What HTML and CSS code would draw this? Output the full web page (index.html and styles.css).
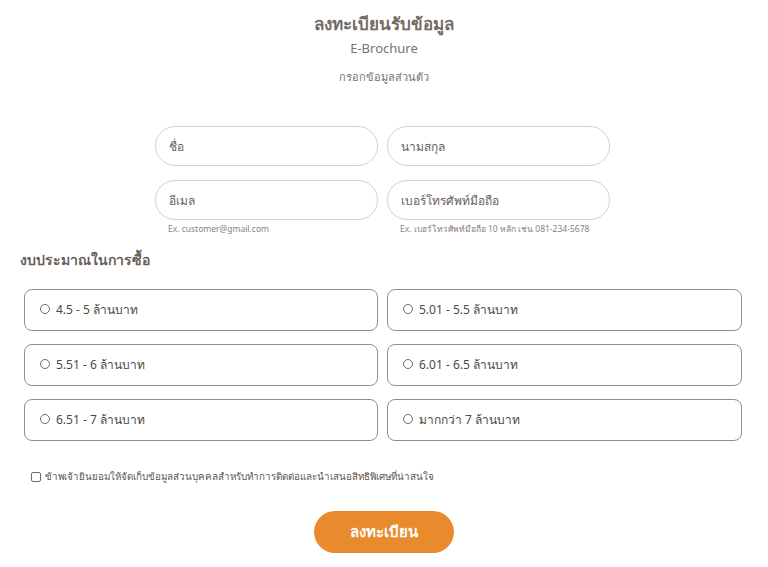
FILE: index.html
```html
<!DOCTYPE html>
<html lang="th">
<head>
<meta charset="utf-8">
<link rel="stylesheet" href="styles.css">
</head>
<body>
<main class="page">
  <header class="head">
    <h1 class="title">ลงทะเบียนรับข้อมูล</h1>
    <div class="sub">E-Brochure</div>
    <div class="note">กรอกข้อมูลส่วนตัว</div>
  </header>

  <section class="fields">
    <div class="field"><div class="input">ชื่อ</div></div>
    <div class="field"><div class="input">นามสกุล</div></div>
    <div class="field">
      <div class="input">อีเมล</div>
      <div class="hint">Ex. customer@gmail.com</div>
    </div>
    <div class="field">
      <div class="input">เบอร์โทรศัพท์มือถือ</div>
      <div class="hint">Ex. เบอร์โทรศัพท์มือถือ 10 หลัก เช่น 081-234-5678</div>
    </div>
  </section>

  <h2 class="label">งบประมาณในการซื้อ</h2>

  <section class="options">
    <div class="opt"><span class="radio"></span>4.5 - 5 ล้านบาท</div>
    <div class="opt"><span class="radio"></span>5.01 - 5.5 ล้านบาท</div>
    <div class="opt"><span class="radio"></span>5.51 - 6 ล้านบาท</div>
    <div class="opt"><span class="radio"></span>6.01 - 6.5 ล้านบาท</div>
    <div class="opt"><span class="radio"></span>6.51 - 7 ล้านบาท</div>
    <div class="opt"><span class="radio"></span>มากกว่า 7 ล้านบาท</div>
  </section>

  <div class="consent"><span class="check"></span>ข้าพเจ้ายินยอมให้จัดเก็บข้อมูลส่วนบุคคลสำหรับทำการติดต่อและนำเสนอสิทธิพิเศษที่น่าสนใจ</div>

  <div class="submit-row"><button class="submit">ลงทะเบียน</button></div>
</main>
</body>
</html>
```
FILE: styles.css
```css
html, body { margin: 0; padding: 0; background: #fff; }
body {
  font-family: "Noto Sans", "Liberation Sans", sans-serif;
  color: #5e5650;
}
.page { width: 768px; padding-top: 11px; }
.head { display: flex; flex-direction: column; align-items: center; }
.title {
  margin: 0; font-size: 17px; font-weight: 700; color: #746a64;
  line-height: 26px;
}
.sub { font-size: 13px; color: #7a726c; line-height: 18px; margin-top: 2px; }
.note { font-size: 11px; color: #7a726c; line-height: 16px; margin-top: 12px; }

.fields {
  width: 455px; margin: 41px 0 0 155px;
  display: grid; grid-template-columns: 223px 223px; column-gap: 9px; row-gap: 14px;
}
.input {
  height: 38px; border: 1px solid #d9d1c9; border-radius: 20px;
  display: flex; align-items: center; padding-left: 13px;
  font-size: 12px; color: #6a615b;
}
.hint { font-size: 8.5px; color: #8a827c; margin: 3px 0 0 13px; line-height: 12px; }

.label {
  margin: 15px 0 0 20px; font-size: 14px; font-weight: 700; color: #6a615b; line-height: 20px;
}
.options {
  width: 718px; margin: 19px 0 0 24px;
  display: grid; grid-template-columns: 354px 355px; column-gap: 9px; row-gap: 13px;
}
.opt {
  height: 38px; border: 1px solid #928d89; border-radius: 8px;
  display: flex; align-items: center; padding-left: 15px; padding-bottom: 2px;
  font-size: 12px; color: #4f4843;
}
.radio {
  width: 8px; height: 8px; border: 1px solid #6f6a66; border-radius: 50%;
  margin-right: 6px; flex: none;
}
.consent {
  margin: 29px 0 0 31px; display: flex; align-items: center;
  font-size: 9.8px; color: #5e5650; line-height: 14px;
}
.check {
  width: 8px; height: 8px; border: 1px solid #6f6a66; border-radius: 2px; margin-right: 4px; flex: none;
}
.submit-row { display: flex; justify-content: center; margin-top: 27px; }
.submit {
  width: 140px; height: 42px; border: none; border-radius: 21px;
  background: #e98a2c; color: #fff; font-family: inherit; font-size: 15px; font-weight: 700;
}
```
